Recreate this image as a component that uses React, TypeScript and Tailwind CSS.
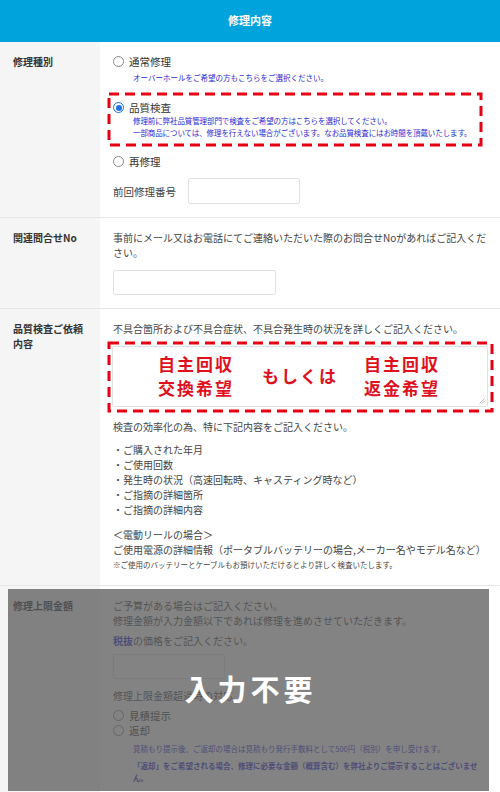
import clsx from 'clsx'
import type { ReactNode } from 'react'

const row = 'flex border-b border-[#e6e6e6]'
const label = 'w-[100px] shrink-0 bg-[#f5f5f5] pl-[13px] pr-2 text-[10px] leading-[15px] font-bold text-[#333]'
const body = 'flex-1 pl-[13px] pr-[10px] text-[10px] leading-[15px] text-[#444]'
const note = 'text-[7.5px] leading-[12px] text-[#2a2ad6]'

function Radio({ checked = false, children }: { checked?: boolean; children: ReactNode }) {
  return (
    <label className="flex items-center gap-[5px] text-[10.5px] leading-[15px] text-[#333]">
      <span
        className={clsx(
          'flex h-[11px] w-[11px] items-center justify-center rounded-full border bg-white',
          checked ? 'border-[#1a73e8]' : 'border-[#8a8a8a]'
        )}
      >
        {checked && <span className="h-[6px] w-[6px] rounded-full bg-[#1a73e8]" />}
      </span>
      {children}
    </label>
  )
}

// red dashed frame drawn on top of the wrapped block
function Dashed({ className, children }: { className?: string; children: ReactNode }) {
  return (
    <div className={clsx('relative', className)}>
      {children}
      <svg className="pointer-events-none absolute inset-[1.5px] h-[calc(100%-3px)] w-[calc(100%-3px)] overflow-visible">
        <rect x="0" y="0" width="100%" height="100%" fill="none" stroke="#e60012" strokeWidth="3" strokeDasharray="10 6" />
      </svg>
    </div>
  )
}

function Box({ className }: { className?: string }) {
  return <div className={clsx('rounded-[2px] border border-[#e2e2e2] bg-white', className)} />
}

export default function App() {
  return (
    <div className="w-[500px] bg-white font-['Noto_Sans_CJK_JP','Noto_Sans',sans-serif]">
      <div className="flex h-[42px] items-center justify-center bg-[#00a3db] pb-[2px] text-[11px] font-bold text-white">
        修理内容
      </div>

      {/* 修理種別 */}
      <div className={row}>
        <div className={clsx(label, 'pt-[12px]')}>修理種別</div>
        <div className={clsx(body, 'pt-[12px] pb-[13px]')}>
          <Radio>通常修理</Radio>
          <p className={clsx(note, 'mt-[3px] pl-[20px]')}>オーバーホールをご希望の方もこちらをご選択ください。</p>
          <Dashed className="-ml-[6px] mt-[8px] w-[375px] px-[6px] pt-[8px] pb-[7px]">
            <Radio checked>品質検査</Radio>
            <p className={clsx(note, 'whitespace-nowrap pl-[20px] tracking-[-0.1px]')}>
              修理前に弊社品質管理部門で検査をご希望の方はこちらを選択してください。
              <br />
              一部商品については、修理を行えない場合がございます。なお品質検査にはお時間を頂戴いたします。
            </p>
          </Dashed>
          <div className="mt-[8px]">
            <Radio>再修理</Radio>
          </div>
          <div className="mt-[9px] flex items-center gap-[12px]">
            <span className="text-[10.5px] text-[#444]">前回修理番号</span>
            <Box className="h-[26px] w-[112px]" />
          </div>
        </div>
      </div>

      {/* 関連問合せNo */}
      <div className={row}>
        <div className={clsx(label, 'pt-[12px]')}>関連問合せNo</div>
        <div className={clsx(body, 'pt-[12px] pb-[13px]')}>
          <p>事前にメール又はお電話にてご連絡いただいた際のお問合せNoがあればご記入ください。</p>
          <Box className="mt-[10px] h-[25px] w-[163px]" />
        </div>
      </div>

      {/* 品質検査ご依頼内容 */}
      <div className={row}>
        <div className={clsx(label, 'pt-[12px]')}>
          品質検査ご依頼
          <br />
          内容
        </div>
        <div className={clsx(body, 'pt-[12px] pb-[14px]')}>
          <p>不具合箇所および不具合症状、不具合発生時の状況を詳しくご記入ください。</p>
          <Dashed className="-ml-[6px] mt-[5px] h-[71px] w-[386px] p-[5px]">
            <div className="relative flex h-full items-center whitespace-nowrap rounded-[2px] border border-[#e2e2e2] bg-white pb-[1px] text-[17px] font-bold leading-[24px] tracking-[2px] text-[#e0101c]">
              <div className="ml-[38px] w-[90px] text-center">
                自主回収
                <br />
                交換希望
              </div>
              <div className="ml-[21px] w-[76px] text-center">もしくは</div>
              <div className="ml-[19px] w-[90px] text-center">
                自主回収
                <br />
                返金希望
              </div>
              <svg className="absolute bottom-[2px] right-[2px]" width="6" height="6" viewBox="0 0 6 6">
                <path d="M0.5 5.5 L5.5 0.5 M3 5.5 L5.5 3" stroke="#aaa" strokeWidth="0.8" />
              </svg>
            </div>
          </Dashed>
          <p className="mt-[7px]">検査の効率化の為、特に下記内容をご記入ください。</p>
          <ul className="mt-[8px]">
            <li>・ご購入された年月</li>
            <li>・ご使用回数</li>
            <li>・発生時の状況（高速回転時、キャスティング時など）</li>
            <li>・ご指摘の詳細箇所</li>
            <li>・ご指摘の詳細内容</li>
          </ul>
          <p className="mt-[10px]">＜電動リールの場合＞</p>
          <p>ご使用電源の詳細情報（ポータブルバッテリーの場合,メーカー名やモデル名など）</p>
          <p className="mt-[2px] text-[7.5px] leading-[12px]">※ご使用のバッテリーとケーブルもお預けいただけるとより詳しく検査いたします。</p>
        </div>
      </div>

      {/* 修理上限金額 */}
      <div className="relative flex">
        <div className={clsx(label, 'pt-[12px]')}>修理上限金額</div>
        <div className={clsx(body, 'pt-[12px] pb-[14px]')}>
          <p>ご予算がある場合はご記入ください。</p>
          <p>修理金額が入力金額以下であれば修理を進めさせていただきます。</p>
          <p className="mt-[5px]">
            <span className="font-bold text-[#2a2ad6]">税抜</span>の価格をご記入ください。
          </p>
          <Box className="mt-[6px] h-[25px] w-[112px]" />
          <p className="mt-[9px]">修理上限金額超過時の対応</p>
          <div className="mt-[5px]">
            <Radio>見積提示</Radio>
          </div>
          <Radio>返却</Radio>
          <p className={clsx(note, 'mt-[5px] pl-[20px]')}>見積もり提示後、ご返却の場合は見積もり発行手数料として500円（税別）を申し受けます。</p>
          <p className={clsx(note, 'mt-[5px] pl-[20px] pr-[10px] font-bold leading-[11px]')}>
            「返却」をご希望される場合、修理に必要な金額（概算含む）を弊社よりご提示することはございません。
          </p>
        </div>
        <div className="absolute left-[8px] top-[3px] flex h-[202px] w-[481px] items-center justify-center bg-[rgba(90,90,90,0.75)]">
          <span className="pb-[2px] pl-[4px] text-[29px] font-bold tracking-[4px] text-white">入力不要</span>
        </div>
      </div>
    </div>
  )
}
